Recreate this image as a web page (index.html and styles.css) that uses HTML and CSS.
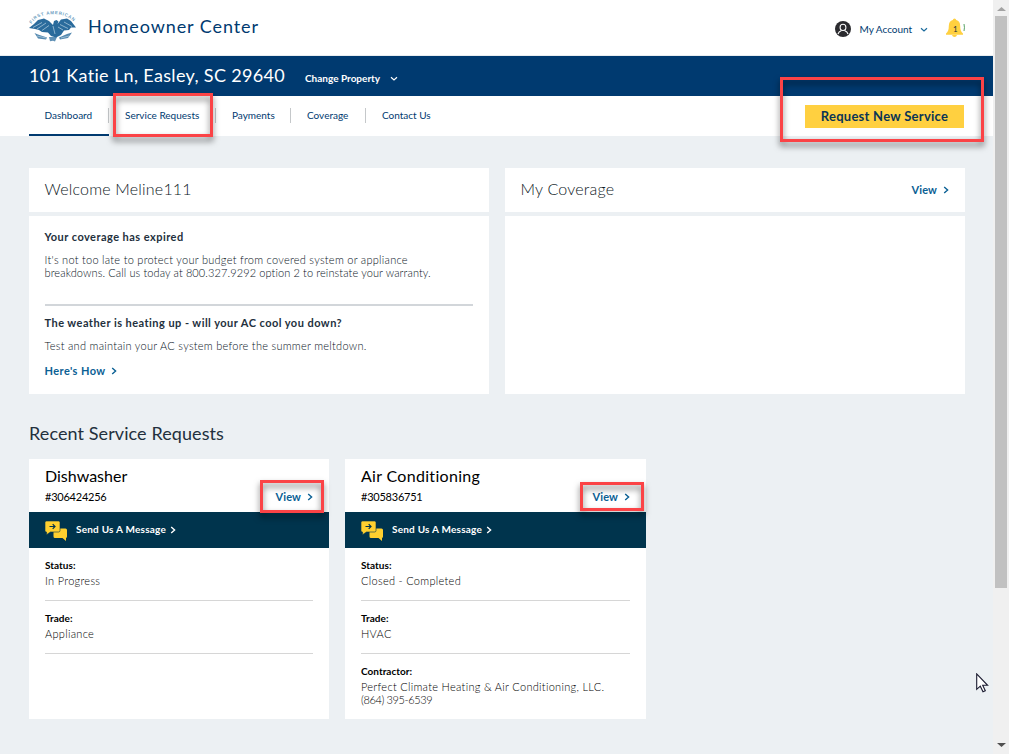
FILE: index.html
```
<!DOCTYPE html>
<html lang="en">
<head>
<meta charset="utf-8">
<title>Homeowner Center</title>
<link rel="stylesheet" href="styles.css">
</head>
<body>
<svg class="defs" aria-hidden="true">
  <symbol id="chev" viewBox="0 0 6 8"><path d="M1.2 1 4.6 4 1.2 7" fill="none" stroke="currentColor" stroke-width="1.4"/></symbol>
  <symbol id="down" viewBox="0 0 8 6"><path d="M1 1.3 4 4 7 1.3" fill="none" stroke="currentColor" stroke-width="1.2"/></symbol>
  <symbol id="chat" viewBox="0 0 22 20">
    <path d="M10 7.500h10.500q1.500 0 1.500 1.500v6.500q0 1.500-1.500 1.500H21v3l-3.500-3H10q-1.500 0-1.500-1.500V9Q8.500 7.500 10 7.500z" fill="#ffd02f"/>
    <path d="M1.500 0h12Q15 0 15 1.500v8q0 1.500-1.500 1.500H5.500l-4 2.700V11Q0 11 0 9.500v-8Q0 0 1.500 0z" fill="#ffd02f" stroke="#00344d" stroke-width=".6"/>
    <path d="M4.500 5.500h5M7.700 3.200 10 5.500 7.700 7.800" fill="none" stroke="#00344d" stroke-width="1.200"/>
  </symbol>
</svg>
<div class="page">
  <header class="top">
    <svg class="logo" viewBox="0 0 48 33">
      <defs><path id="arc" d="M2.500 14C10 .8 38 .8 46.500 14"/></defs>
      <text class="logo-text"><textPath href="#arc" textLength="47">FIRST AMERICAN</textPath></text>
      <g fill="#2a6b9c">
        <path d="M0 18 5 14 9 10 15 8.500 20 11 24 15 25 11 27.500 10 29.500 11.500 28.500 14 32 9.500 38 8.500 42 11 47 17.500 42 17.500 40 20 35 20.500 32 25 27 27.500 22 26 19 22.500 13 22 10 20 6 19z"/>
        <path d="M5.500 23 9 24.500 18 27.500 17 29.500 9 28.500z" opacity=".8"/>
        <path d="M43 22.500 38 24 30 27.500 31 29.500 39 28z" opacity=".8"/>
        <path d="M20 27h8l-2 4.500-2-.8-3 .6z" opacity=".75"/>
      </g>
      <g fill="none" stroke="#b9d2e3" stroke-width=".7">
        <path d="M4 17.500 13 12.500M8 19 17 13M13 20.500 20 15.500M43 16.500 35 12M39 18.500 31 14.500M34 20 29 17M8 26l9 2M40 26l-8 2M24 16l2 8"/>
      </g>
    </svg>
    <h1 class="brand">Homeowner Center</h1>
    <div class="account">
      <svg class="user" viewBox="0 0 16 16"><circle cx="8" cy="8" r="8" fill="#2b2b2f"/><path d="M8 3.200c1.900 0 2.900 1.300 2.900 3S9.700 9.500 8 9.500 5.100 7.900 5.100 6.200 6.100 3.200 8 3.200zM3 13c.6-2 2-3 3.300-3.300M13 13c-.6-2-2-3-3.300-3.300" fill="none" stroke="#fff" stroke-width="1.100"/></svg>
      <span class="account-name">My Account</span>
      <svg class="down blue" viewBox="0 0 8 6"><use href="#down"/></svg>
      <svg class="bell" viewBox="0 0 19 20"><path d="M8.500.5q1.500 0 1.700 1.500 4 1 4 6c0 4 1 6 2.800 7.500v1.300H0v-1.300C1.800 14 2.800 12 2.800 8q0-5 4-6Q7 .5 8.500.5zM6 17h5q-.5 2-2.500 2T6 17z" fill="#ffd040"/><path d="M18 6q.9 3.500 0 7" fill="none" stroke="#2f8a3c" stroke-width=".8"/><text x="7" y="14" class="bell-count">1</text></svg>
    </div>
  </header>
  <div class="property">
    <span class="address">101 Katie Ln, Easley, SC 29640</span>
    <span class="change">Change Property</span>
    <svg class="down" viewBox="0 0 8 6"><use href="#down"/></svg>
  </div>
  <nav class="nav">
    <a class="tab tab-first">Dashboard</a>
    <a class="tab tab-wide">Service Requests</a>
    <a class="tab">Payments</a>
    <a class="tab">Coverage</a>
    <a class="tab tab-last">Contact Us</a>
    <button class="cta">Request New Service</button>
  </nav>
  <main class="main">
    <div class="panels">
      <section class="panel">
        <div class="panel-head"><h2>Welcome Meline111</h2></div>
        <div class="panel-body">
          <h3>Your coverage has expired</h3>
          <p>It's not too late to protect your budget from covered system or appliance<br><span class="tight">breakdowns. Call us today at 800.327.9292 option 2 to reinstate your warranty.</span></p>
          <hr>
          <h3>The weather is heating up - will your AC cool you down?</h3>
          <p>Test and maintain your AC system before the summer meltdown.</p>
          <a class="link">Here's How<svg class="chev" viewBox="0 0 6 8"><use href="#chev"/></svg></a>
        </div>
      </section>
      <section class="panel">
        <div class="panel-head"><h2>My Coverage</h2><a class="link">View<svg class="chev" viewBox="0 0 6 8"><use href="#chev"/></svg></a></div>
        <div class="panel-body"></div>
      </section>
    </div>
    <h2 class="section-title">Recent Service Requests</h2>
    <div class="requests">
      <article class="request">
        <div class="request-head">
          <h3>Dishwasher</h3>
          <div class="request-row"><span class="number">#306424256</span><a class="link">View<svg class="chev" viewBox="0 0 6 8"><use href="#chev"/></svg></a></div>
        </div>
        <a class="message"><svg class="chat" viewBox="0 0 22 20"><use href="#chat"/></svg><span>Send Us A Message</span><svg class="chev" viewBox="0 0 6 8"><use href="#chev"/></svg></a>
        <dl class="details">
          <div><dt>Status:</dt><dd>In Progress</dd></div>
          <div><dt>Trade:</dt><dd>Appliance</dd></div>
        </dl>
      </article>
      <article class="request request-wide">
        <div class="request-head">
          <h3>Air Conditioning</h3>
          <div class="request-row"><span class="number">#305836751</span><a class="link">View<svg class="chev" viewBox="0 0 6 8"><use href="#chev"/></svg></a></div>
        </div>
        <a class="message"><svg class="chat" viewBox="0 0 22 20"><use href="#chat"/></svg><span>Send Us A Message</span><svg class="chev" viewBox="0 0 6 8"><use href="#chev"/></svg></a>
        <dl class="details">
          <div><dt>Status:</dt><dd>Closed - Completed</dd></div>
          <div><dt>Trade:</dt><dd>HVAC</dd></div>
          <div><dt>Contractor:</dt><dd>Perfect Climate Heating &amp; Air Conditioning, LLC.<br><span class="phone">(864) 395-6539</span></dd></div>
        </dl>
      </article>
    </div>
  </main>
</div>
<aside class="scrollbar">
  <svg viewBox="0 0 9 4"><path d="M0 4 4.500 0 9 4z" fill="#a3a3a3"/></svg>
  <div class="thumb"></div>
  <svg class="arrow-down" viewBox="0 0 9 4"><path d="M0 0h9L4.500 4z" fill="#505050"/></svg>
</aside>
<div class="mark mark-nav"></div>
<div class="mark mark-cta"></div>
<div class="mark mark-view1"></div>
<div class="mark mark-view2"></div>
<svg class="cursor" viewBox="0 0 13 20"><path d="M.7.900v15.500l3.600-3.200 2.700 5.600 2.300-1-2.600-5.500h4.900z" fill="#fff" stroke="#1b1b30" stroke-width="1.100"/></svg>
</body>
</html>
```
FILE: styles.css
```
* { box-sizing: border-box; }
body { margin: 0; width: 1009px; height: 754px; display: flex; overflow: hidden; position: relative; background: #ecf0f3; font-family: Lato, "Open Sans", sans-serif; font-size: 11px; color: #23303d; }
h1, h2, h3, p, dl, dd { margin: 0; white-space: nowrap; }
svg { display: block; flex: none; }
.defs { position: absolute; width: 0; height: 0; }
.page { width: 993px; }
.top { height: 56px; display: flex; align-items: center; padding: 0 28px 0 29px; background: #fff; border-bottom: 1px solid #e9edef; }
.logo { width: 48px; height: 33px; margin-top: -3px; overflow: visible; }
.logo-text { font: 700 4.500px "Liberation Sans", sans-serif; fill: #6f9fc2; }
.brand { margin: -3px 0 0 11px; font-size: 18px; font-weight: 400; letter-spacing: .92px; color: #003a70; }
.account { margin-left: auto; display: flex; align-items: center; padding-top: 3px; color: #003a70; }
.user { width: 16px; height: 16px; margin-right: 8.500px; }
.account-name { font-size: 10px; width: 53px; white-space: nowrap; }
.down { width: 8px; height: 6px; }
.blue { color: #1a6a9c; margin: 1px 18px 0 7.500px; }
.bell { width: 19px; height: 20px; margin-top: -2px; }
.bell-count { font: 8px Lato, sans-serif; fill: #23303d; }
.property { height: 40px; display: flex; align-items: center; padding-left: 29px; background: #003a70; color: #fff; white-space: nowrap; }
.address { font-size: 18px; letter-spacing: .34px; width: 276px; margin-top: -2px; }
.change { font-size: 10px; font-weight: 700; width: 85px; padding-top: 3px; }
.property .down { margin-top: 5px; }
.nav { height: 40px; display: flex; align-items: center; padding: 0 29px; background: #fff; color: #003a70; font-size: 10px; white-space: nowrap; }
.tab { width: 75px; height: 40px; display: flex; align-items: center; padding: 0 0 2px 16px; background: linear-gradient(#c5c8ca, #c5c8ca) right 12px / 1px 15px no-repeat; }
.tab-first { width: 80px; padding-bottom: 0; padding-left: 15.500px; border-bottom: 2px solid #003a70; }
.tab-wide { width: 107px; }
.tab-last { background: none; }
.cta { margin-left: auto; width: 159px; height: 23px; padding: 0 0 1px; border: 0; background: #ffd040; color: #0a3455; font: 700 13px Lato, sans-serif; letter-spacing: .27px; }
.main { padding: 32px 28px 0 29px; }
.panels { display: flex; gap: 16px; }
.panel { width: 460px; display: flex; flex-direction: column; gap: 4px; }
.panel-head { height: 44px; display: flex; align-items: center; justify-content: space-between; padding: 0 16px 0 15.500px; background: #fff; }
.panel-head h2 { margin-top: -3px; font-size: 16px; font-weight: 300; letter-spacing: .2px; color: #0c1824; }
.panel-body { height: 178px; padding: 14px 16px 0 15.500px; background: #fff; }
.panel-body h3 { font-size: 11px; line-height: 14px; font-weight: 700; letter-spacing: .46px; }
.panel-body p { margin-top: 9px; line-height: 13px; font-weight: 300; letter-spacing: .27px; color: #08121c; }
.panel-body .tight { letter-spacing: .11px; }
.panel-body hr { height: 2px; border: 0; margin: 25px 0 10px; background: #d2d6da; }
.link { display: flex; align-items: center; gap: 6px; color: #0a6094; font-size: 11px; line-height: 14px; font-weight: 700; letter-spacing: .12px; }
.panel-body .link { margin-top: 12px; gap: 5px; letter-spacing: .42px; }
.chev { width: 6px; height: 8px; }
.section-title { margin: 28px 0 15px; font-size: 18px; line-height: 22px; font-weight: 400; letter-spacing: .09px; }
.requests { display: flex; gap: 16px; color: #000; }
.request { width: 300px; height: 260px; background: #fff; }
.request-wide { width: 301px; }
.request-wide h3 { letter-spacing: .31px; }
.request-head { height: 53px; padding: 7px 16px 0; }
.request-head h3 { font-size: 16px; line-height: 20px; font-weight: 400; }
.request-row { display: flex; align-items: center; justify-content: space-between; height: 22px; }
.number { margin-top: -1px; letter-spacing: -.23px; }
.message { height: 36px; display: flex; align-items: center; padding-left: 16px; background: #00344d; color: #fff; font-size: 10px; font-weight: 700; letter-spacing: .22px; }
.message span { margin-top: -2px; }
.chat { width: 22px; height: 20px; margin: 2px 9px 0 0; }
.message .chev { margin-left: 4px; }
.details { padding: 0 16px; }
.details div { height: 53px; padding-top: 11px; border-bottom: 1px solid #d6d6d6; }
.details div:nth-child(3) { border: 0; }
.details dt { font-size: 10px; line-height: 13px; font-weight: 700; letter-spacing: .03px; }
.details dd { margin-top: 2px; line-height: 13px; font-weight: 300; letter-spacing: .3px; }
.phone { letter-spacing: -.38px; }
.scrollbar { width: 16px; display: flex; flex-direction: column; align-items: center; padding: 7px 1px 7px; background: #f0f0f0; }
.scrollbar svg { width: 9px; height: 4px; }
.thumb { width: 12px; height: 572px; margin-top: 5px; background: #c1c1c1; }
.arrow-down { margin-top: auto; }
.mark { position: absolute; border: 3px solid #fb4346; filter: drop-shadow(0 4px 3px rgba(0, 0, 0, .55)); }
.mark-nav { left: 113px; top: 93px; width: 100px; height: 44px; }
.mark-cta { left: 780px; top: 77px; width: 204px; height: 65px; }
.mark-view1 { left: 260px; top: 480px; width: 64px; height: 33px; }
.mark-view2 { left: 580px; top: 482px; width: 64px; height: 29px; }
.cursor { position: absolute; left: 976px; top: 673px; width: 13px; height: 20px; }
```
